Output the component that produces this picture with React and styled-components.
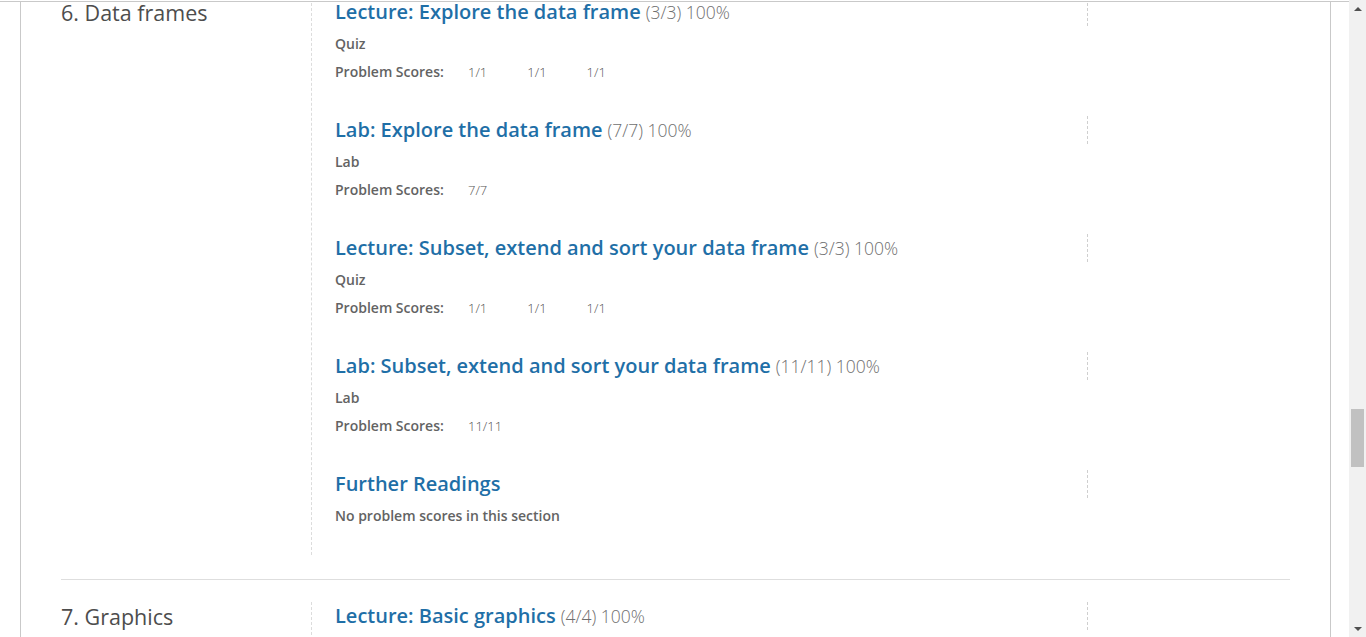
import React from 'react';
import styled, { createGlobalStyle } from 'styled-components';

const chapters = [
  {
    title: '6. Data frames',
    sections: [
      { name: 'Lecture: Explore the data frame', score: '(3/3) 100%', kind: 'Quiz', problems: ['1/1', '1/1', '1/1'] },
      { name: 'Lab: Explore the data frame', score: '(7/7) 100%', kind: 'Lab', problems: ['7/7'] },
      { name: 'Lecture: Subset, extend and sort your data frame', score: '(3/3) 100%', kind: 'Quiz', problems: ['1/1', '1/1', '1/1'] },
      { name: 'Lab: Subset, extend and sort your data frame', score: '(11/11) 100%', kind: 'Lab', problems: ['11/11'] },
      { name: 'Further Readings', score: '', kind: null, problems: [] },
    ],
  },
  {
    title: '7. Graphics',
    sections: [
      { name: 'Lecture: Basic graphics', score: '(4/4) 100%', kind: 'Quiz', problems: ['1/1', '1/1', '1/1', '1/1'] },
    ],
  },
];

function App() {
  return (
    <>
      <GlobalStyle />
      <Page>
        <Main>
          <Frame>
            <ChapterList>
              {chapters.map((chapter) => (
                <Chapter key={chapter.title}>
                  <ChapterTitle>{chapter.title}</ChapterTitle>
                  <Sections>
                    {chapter.sections.map((section) => (
                      <Section key={section.name}>
                        <SectionHeader>
                          <SectionLink href='#'>{section.name}</SectionLink>
                          {section.score && <SectionScore>{section.score}</SectionScore>}
                        </SectionHeader>
                        {section.kind && <Meta>{section.kind}</Meta>}
                        {section.problems.length > 0 ? (
                          <ScoreRow>
                            <ScoreLabel>Problem Scores:</ScoreLabel>
                            <ScoreList>
                              {section.problems.map((p, i) => (
                                <Score key={i}>{p}</Score>
                              ))}
                            </ScoreList>
                          </ScoreRow>
                        ) : (
                          <Meta>No problem scores in this section</Meta>
                        )}
                      </Section>
                    ))}
                  </Sections>
                </Chapter>
              ))}
            </ChapterList>
          </Frame>
        </Main>
        <Scrollbar>
          <Arrow $dir='up' />
          <Track>
            <Thumb />
          </Track>
          <Arrow $dir='down' />
        </Scrollbar>
      </Page>
    </>
  );
}

export default App;

const GlobalStyle = createGlobalStyle`
  html, body {
    margin: 0;
    padding: 0;
    background: #fff;
    overflow: hidden;
  }
  body {
    font-family: "Open Sans", "Liberation Sans", sans-serif;
  }
`;

const Page = styled.div`
  display: flex;
  height: 637px;
  overflow: hidden;
`;

const Main = styled.div`
  flex: 1;
  margin-top: 1px;
  border-top: 1px solid #c9c9c9;
  overflow: hidden;
`;

const Frame = styled.div`
  margin-left: 20px;
  width: 1311px;
  height: 100%;
  box-sizing: border-box;
  border-left: 1px solid #c9c9c9;
  border-right: 1px solid #c9c9c9;
  padding: 0 40px;
  overflow: hidden;
`;

const ChapterList = styled.div`
  margin-top: -4px;
`;

const Chapter = styled.section`
  display: flex;
  padding-bottom: 24px;
  margin-bottom: 22px;
  border-bottom: 1px solid #dedede;
`;

const ChapterTitle = styled.h2`
  width: 250px;
  flex-shrink: 0;
  margin: 0;
  font-size: 21.5px;
  line-height: 30px;
  font-weight: 400;
  color: #4d4d4d;
`;

const Sections = styled.div`
  flex: 1;
  border-left: 1px dashed #dcdcdc;
  padding-left: 23px;
  padding-bottom: 29px;
`;

const Section = styled.div`
  margin-bottom: 34px;
  &:last-child {
    margin-bottom: 0;
  }
`;

const SectionHeader = styled.h3`
  display: flex;
  align-items: baseline;
  gap: 5px;
  width: 753px;
  height: 28px;
  box-sizing: border-box;
  margin: 0;
  line-height: 28px;
  font-weight: 400;
  border-right: 1px dashed #cfcfcf;
  white-space: nowrap;
`;

const SectionLink = styled.a`
  font-size: 20px;
  color: #1f6fa7;
  font-weight: 600;
  text-decoration: none;
`;

const SectionScore = styled.span`
  font-size: 17.5px;
  font-weight: 300;
  color: #6f6f6f;
`;

const Meta = styled.p`
  margin: 8px 0 0;
  height: 20px;
  font-size: 14px;
  line-height: 20px;
  font-weight: 600;
  color: #636363;
`;

const ScoreRow = styled.div`
  display: flex;
  align-items: center;
  margin-top: 8px;
  height: 20px;
  line-height: 20px;
`;

const ScoreLabel = styled.span`
  width: 133px;
  font-size: 14px;
  font-weight: 600;
  color: #636363;
`;

const ScoreList = styled.ol`
  display: flex;
  gap: 40px;
  margin: 0;
  padding: 0;
  list-style: none;
`;

const Score = styled.li`
  min-width: 19px;
  font-size: 13px;
  font-weight: 300;
  color: #555;
`;

const Scrollbar = styled.div`
  width: 17px;
  flex-shrink: 0;
  background: #f1f1f1;
  display: flex;
  flex-direction: column;
  height: 637px;
`;

const Arrow = styled.div`
  height: 17px;
  display: flex;
  align-items: center;
  justify-content: center;
  &::before {
    content: '';
    width: 0;
    height: 0;
    border-left: 4px solid transparent;
    border-right: 4px solid transparent;
    ${(p) =>
      p.$dir === 'up'
        ? 'border-bottom: 4px solid #505050;'
        : 'border-top: 4px solid #505050;'}
  }
`;

const Track = styled.div`
  flex: 1;
  padding-top: 392px;
  display: flex;
  justify-content: center;
`;

const Thumb = styled.div`
  width: 13px;
  height: 58px;
  background: #c1c1c1;
`;
